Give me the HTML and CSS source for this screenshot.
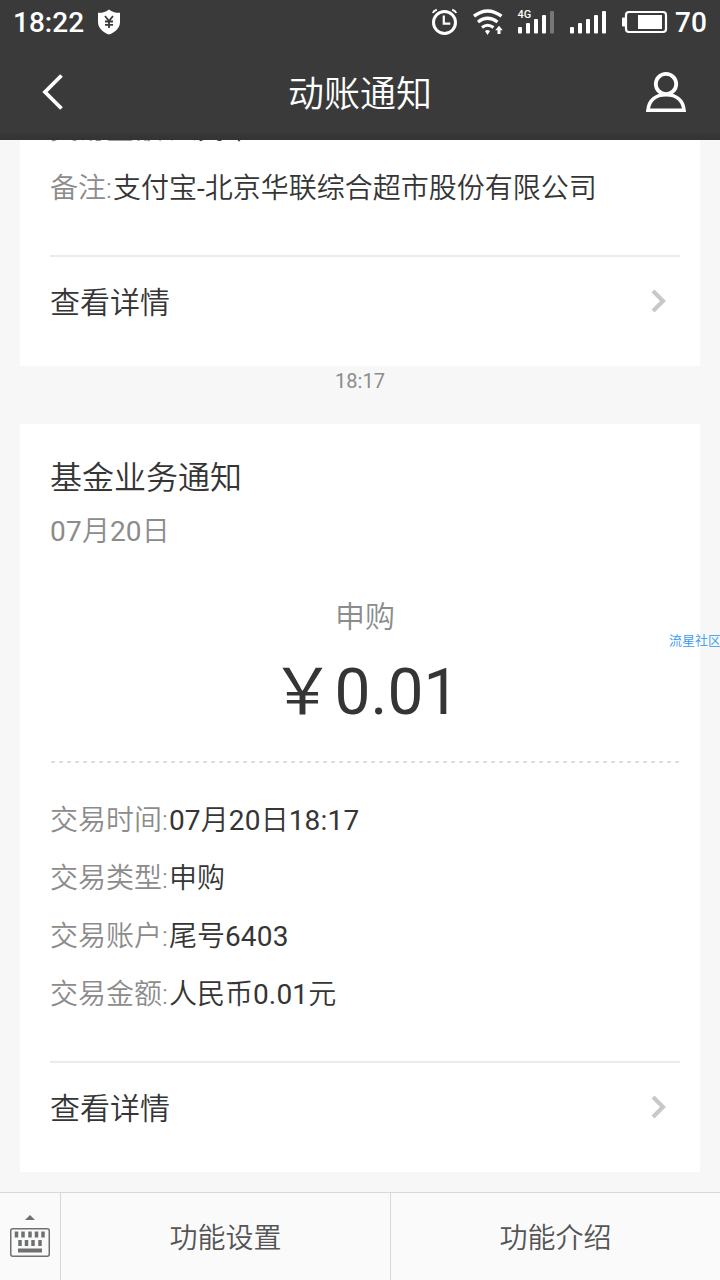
FILE: index.html
```html
<!DOCTYPE html>
<html lang="zh-CN">
<head>
  <meta charset="UTF-8">
  <meta name="viewport" content="width=device-width, initial-scale=1.0">
  <title>动账通知</title>
  <link rel="stylesheet" href="styles.css">
</head>
<body>
  <div class="app">
    <header class="header">
      <div class="status-bar">
        <span class="clock">18:22</span>
        <svg class="shield" width="24" height="26" viewBox="0 0 24 26">
          <path d="M12 0.5C9 3 5 4 1 3.800V13c0 6 5 10.500 11 12.500 6-2 11-6.500 11-12.500V3.800C19 4 15 3 12 0.500z" fill="#fff"/>
          <path d="M8 7l4 5 4-5M8 12.500h8M8 15.800h8M12 12v7" fill="none" stroke="#3a3a3a" stroke-width="1.800"/>
        </svg>
        <svg class="status-icons" width="240" height="32" viewBox="430 6 240 32">
          <g fill="none" stroke="#fff">
            <circle cx="444.500" cy="22.500" r="11" stroke-width="3"/>
            <path d="M443.800 15.500v8.200h6.500" stroke-width="2.200"/>
            <path d="M432.800 13q1-2.500 4-3.300M456.200 13q-1-2.500-4-3.300" stroke-width="2"/>
            <path d="M474 16.200q13.500-10.500 27.500 0" stroke-width="3.400"/>
            <path d="M478 22q9.500-7.500 19.500 0" stroke-width="3.200"/>
            <path d="M482 27.500q5.500-4.500 11.500 0" stroke-width="3"/>
          </g>
          <g fill="#fff">
            <path d="M485 31q2.500-2 5 0l-2.500 4z"/>
            <path d="M499 25.800l3.800 4.500h-2.300v3.700h-3v-3.700h-2.300z"/>
            <rect x="518" y="27" width="4" height="6.500" rx="1"/>
            <rect x="526" y="23" width="4" height="10.500" rx="1"/>
            <rect x="534" y="19" width="4" height="14.500" rx="1"/>
            <rect x="542" y="15" width="4" height="18.500" rx="1"/>
            <rect x="550" y="11" width="4" height="22.500" rx="1" fill="#777"/>
            <rect x="570" y="27" width="4" height="6.500" rx="1"/>
            <rect x="578" y="23" width="4" height="10.500" rx="1"/>
            <rect x="586" y="19" width="4" height="14.500" rx="1"/>
            <rect x="594" y="15" width="4" height="18.500" rx="1"/>
            <rect x="602" y="11" width="4" height="22.500" rx="1"/>
            <rect x="622" y="17.500" width="4" height="9" rx="1"/>
            <rect x="638" y="15" width="24" height="14"/>
            <text class="network" x="517.500" y="18">4G</text>
          </g>
          <rect x="626" y="12" width="40" height="20" rx="3" fill="none" stroke="#fff" stroke-width="2.200"/>
        </svg>
        <span class="battery">70</span>
      </div>
      <div class="nav-bar">
        <svg class="back" width="24" height="36" viewBox="0 0 24 36">
          <path d="M21.500 1.500L5 18l16.500 16.500" fill="none" stroke="#fff" stroke-width="3.800"/>
        </svg>
        <h1 class="nav-title">动账通知</h1>
        <svg class="profile" width="42" height="42" viewBox="0 0 42 42">
          <circle cx="21" cy="13" r="10.200" fill="none" stroke="#fff" stroke-width="3.800"/>
          <path d="M3 39.200C4 29 11 23.800 21 23.800S38 29 39 39.200z" fill="none" stroke="#fff" stroke-width="3.600"/>
        </svg>
      </div>
    </header>

    <main class="messages">
      <section class="card">
        <p class="row row-scrolled"><span class="label">交易金额:</span>人民币</p>
        <p class="row"><span class="label">备注:</span>支付宝<b>-</b>北京华联综合超市股份有限公司</p>
        <a class="detail-link">
          <span>查看详情</span>
          <svg width="18" height="26" viewBox="0 0 18 26"><path d="M3 2L13 12 3 22" fill="none" stroke="#c8c8c8" stroke-width="4.200"/></svg>
        </a>
      </section>

      <div class="time">18:17</div>

      <section class="card">
        <h2 class="card-title">基金业务通知</h2>
        <p class="card-date"><b>07</b>月<b>20</b>日</p>
        <p class="amount-label">申购</p>
        <p class="amount"><span class="yen">￥</span>0.01</p>
        <svg class="dashes" width="630" height="2" viewBox="0 0 630 2"><path d="M1 1h628" stroke="#dedede" stroke-width="2" stroke-dasharray="4 4"/></svg>
        <p class="row"><span class="label">交易时间:</span><b>07</b>月<b>20</b>日<b>18:17</b></p>
        <p class="row"><span class="label">交易类型:</span>申购</p>
        <p class="row"><span class="label">交易账户:</span>尾号<b>6403</b></p>
        <p class="row"><span class="label">交易金额:</span>人民币<b>0.01</b>元</p>
        <a class="detail-link">
          <span>查看详情</span>
          <svg width="18" height="26" viewBox="0 0 18 26"><path d="M3 2L13 12 3 22" fill="none" stroke="#c8c8c8" stroke-width="4.200"/></svg>
        </a>
      </section>
    </main>

    <footer class="menu">
      <div class="keyboard">
        <svg width="40" height="44" viewBox="0 0 40 44">
          <path d="M15 5l5-5 5 5z" fill="#6e7072"/>
          <rect x="0.750" y="13.750" width="38.500" height="27.500" rx="2" fill="none" stroke="#6e7072" stroke-width="1.500"/>
          <path d="M6.500 16.500v6M13 16.500v6M20 16.500v6M26.500 16.500v6M33 16.500v6M10 25v6M16.500 25v6M23 25v6M30 25v6" stroke="#6e7072" stroke-width="3.500"/>
          <rect x="8" y="33.500" width="24" height="4" fill="#6e7072"/>
        </svg>
      </div>
      <div class="menu-item">功能设置</div>
      <div class="menu-item">功能介绍</div>
    </footer>

    <span class="watermark">流星社区</span>
  </div>
</body>
</html>
```
FILE: styles.css
```css
body {
  margin: 0;
  font-family: Roboto, "Noto Sans CJK SC", sans-serif;
  font-weight: 350;
  color: #353535;
  background-color: #f7f7f7;
}

h1, h2, p {
  margin: 0;
  font-weight: inherit;
}

/* digits are a little heavier and wider than the chinese text */
b {
  font-weight: 400;
  letter-spacing: 0.2px;
}

svg {
  display: block;
}

.app {
  position: relative;
  display: flex;
  flex-direction: column;
  width: 720px;
  height: 1280px;
  overflow: hidden;
}

.header {
  flex: none;
  box-sizing: border-box;
  height: 140px;
  color: #fff;
  background: linear-gradient(#3a3a3a 132px, #343434 138px);
}

.status-bar {
  display: flex;
  align-items: center;
  height: 44px;
  padding-left: 13px;
  font-size: 28px;
  font-weight: 500;
}

.clock {
  width: 84px;
}

.status-icons {
  margin-left: 309px;
}

.network {
  font-size: 11px;
  font-weight: 500;
}

.battery {
  margin-left: 5px;
}

.nav-bar {
  display: flex;
  align-items: center;
  justify-content: space-between;
  height: 96px;
  padding: 0 33px 0 40px;
}

.nav-title {
  padding-top: 6px;
  padding-left: 11px;
  font-size: 36px;
  line-height: 90px;
}

.messages {
  flex: 1;
  min-height: 0;
  display: flex;
  flex-direction: column;
  justify-content: flex-end;
  padding: 0 20px 20px;
  overflow: hidden;
}

.card {
  flex: none;
  padding: 0 20px 19px 30px;
  background-color: #fff;
}

.row {
  box-sizing: border-box;
  height: 58px;
  padding-top: 2px;
  font-size: 28px;
  line-height: 58px;
  white-space: nowrap;
}

/* mostly scrolled under the header */
.row-scrolled {
  padding-top: 1px;
}

.label {
  margin-right: 1px;
  color: #8c8c8c;
}

.detail-link {
  display: flex;
  align-items: center;
  justify-content: space-between;
  height: 90px;
  margin-top: 39px;
  padding-right: 12px;
  border-top: 2px solid #ebebeb;
  font-size: 30px;
}

.detail-link span {
  margin-bottom: 4px;
}

.time {
  flex: none;
  height: 58px;
  font-size: 20px;
  font-weight: 400;
  line-height: 31px;
  text-align: center;
  color: #8c8c8c;
}

.card-title {
  padding-top: 32px;
  font-size: 32px;
  line-height: 44px;
}

.card-date {
  margin-top: 11px;
  font-size: 28px;
  line-height: 42px;
  color: #8c8c8c;
}

.amount-label {
  margin-top: 44px;
  font-size: 30px;
  line-height: 40px;
  text-align: center;
  color: #8c8c8c;
}

.amount {
  height: 80px;
  margin-top: 15px;
  font-size: 64px;
  font-weight: 400;
  line-height: 82px;
  text-align: center;
}

.yen {
  display: inline-block;
  width: 64px;
}

.dashes {
  margin: 29px 0 27px;
}

.menu {
  flex: none;
  display: flex;
  box-sizing: border-box;
  height: 88px;
  border-top: 1px solid #d9d9d9;
  background-color: #fafafa;
}

.keyboard {
  display: flex;
  align-items: center;
  justify-content: center;
  width: 60px;
}

.menu-item {
  flex: 1;
  padding-top: 2px;
  border-left: 1px solid #d9d9d9;
  font-size: 28px;
  line-height: 88px;
  text-align: center;
  color: #555;
}

.watermark {
  position: absolute;
  top: 632px;
  left: 669px;
  font-size: 13px;
  line-height: 18px;
  white-space: nowrap;
  color: #3399ee;
}
```
